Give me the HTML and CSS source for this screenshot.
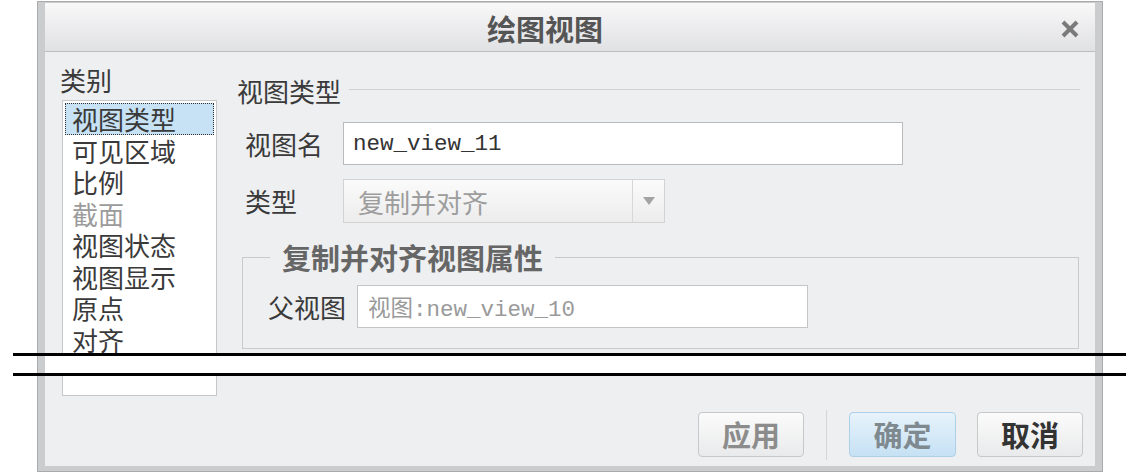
FILE: index.html
```html
<!DOCTYPE html>
<html lang="zh-CN">
<head>
  <meta charset="UTF-8" />
  <title>绘图视图</title>
  <link rel="stylesheet" href="styles.css">
</head>
<body>
  <div class="dialog">
    <div class="titlebar">
      <div class="title">绘图视图</div>
      <div class="close">
        <svg width="18" height="18" viewBox="0 0 18 18">
          <path d="M2 2 L16 16 M16 2 L2 16" stroke="#7a7a7a" stroke-width="4" fill="none"/>
        </svg>
      </div>
    </div>

    <div class="content">
      <div class="main">
        <div class="categories">
          <div class="cat-label">类别</div>
          <ul class="cat-list">
            <li class="selected">视图类型</li>
            <li>可见区域</li>
            <li>比例</li>
            <li class="disabled">截面</li>
            <li>视图状态</li>
            <li>视图显示</li>
            <li>原点</li>
            <li>对齐</li>
          </ul>
        </div>

        <div class="panel">
          <div class="section-head">
            <span>视图类型</span>
            <div class="rule"></div>
          </div>

          <div class="row name-row">
            <label>视图名</label>
            <div class="field name-field">new_view_11</div>
          </div>

          <div class="row type-row">
            <label>类型</label>
            <div class="select">
              <span class="value">复制并对齐</span>
              <span class="arrow"><i></i></span>
            </div>
          </div>

          <fieldset class="group">
            <legend>复制并对齐视图属性</legend>
            <div class="row parent-row">
              <label>父视图</label>
              <div class="field parent-field">视图:new_view_10</div>
            </div>
          </fieldset>
        </div>
      </div>

      <div class="footer">
        <button class="btn apply">应用</button>
        <div class="sep"></div>
        <button class="btn ok">确定</button>
        <button class="btn cancel">取消</button>
      </div>
    </div>
  </div>

  <div class="break"></div>
</body>
</html>
```

FILE: styles.css
```css
body {
  margin: 0;
  background: #fff;
  font-family: "Noto Sans CJK SC", sans-serif;
  color: #3a3a3a;
}
.dialog {
  width: 1066px;
  margin: 1px 0 0 37px;
  box-sizing: border-box;
  border: 1px solid #a9aaac;
  background: #cbccce;
  padding: 1px 7px 5px;
}
.titlebar {
  display: flex;
  align-items: center;
  height: 48px;
  border-bottom: 1px solid #bcbdbf;
  background: linear-gradient(#f8f8f9, #e0e1e3);
}
.title {
  flex: 1;
  text-align: center;
  font-size: 29px;
  font-weight: 700;
  line-height: 1;
  color: #555;
  padding-top: 3px;
}
.close {
  width: 50px;
  display: flex;
  justify-content: center;
  padding-top: 4px;
}
.content {
  height: 414px;
  box-sizing: border-box;
  padding: 13px 15px 9px 17px;
  background: #eeeff1;
  display: flex;
  flex-direction: column;
}
.main {
  display: grid;
  grid-template-columns: 155px 1fr;
  column-gap: 20px;
  height: 331px;
}
.cat-label {
  font-size: 26px;
  line-height: 30px;
  margin: 0 0 5px -2px;
}
.cat-list {
  list-style: none;
  margin: 0;
  padding: 2px;
  height: 296px;
  box-sizing: border-box;
  border: 1px solid #c6c7c9;
  background: #fff;
  overflow: hidden;
}
.cat-list li {
  font-size: 26px;
  line-height: 29.5px;
  padding-left: 6px;
  border: 1px dotted transparent;
  white-space: nowrap;
}
.cat-list li.selected {
  background: #c6e2f4;
  border-color: #333;
}
.cat-list li.disabled {
  color: #9b9b9b;
}
.section-head {
  display: flex;
  align-items: center;
  margin-top: 11px;
  font-size: 26px;
  line-height: 30px;
}
.section-head .rule {
  flex: 1;
  height: 1px;
  background: #cfd0d2;
  margin: 0 0 4px 8px;
}
.row {
  display: flex;
  align-items: center;
}
.row label {
  font-size: 26px;
  line-height: 30px;
}
.name-row {
  margin-top: 16px;
  padding-left: 8px;
}
.name-row label,
.type-row label {
  width: 98px;
}
.type-row {
  margin-top: 14px;
  padding-left: 8px;
}
.field {
  height: 43px;
  box-sizing: border-box;
  border: 1px solid #b9babc;
  background: #fff;
  display: flex;
  align-items: center;
  padding-left: 9px;
  font-family: "Liberation Mono", "Noto Sans CJK SC", monospace;
  font-size: 22.5px;
  color: #333;
}
.name-field {
  width: 560px;
}
.select {
  width: 322px;
  height: 44px;
  box-sizing: border-box;
  border: 1px solid #d2d3d5;
  background: linear-gradient(#fbfbfb, #ececed);
  display: flex;
}
.select .value {
  flex: 1;
  display: flex;
  align-items: center;
  padding-left: 14px;
  font-size: 26px;
  color: #9d9d9d;
}
.select .arrow {
  width: 32px;
  box-sizing: border-box;
  border-left: 1px solid #d6d7d9;
  display: flex;
  align-items: center;
  justify-content: center;
}
.select .arrow i {
  border-left: 6px solid transparent;
  border-right: 6px solid transparent;
  border-top: 8px solid #a3a3a3;
}
.group {
  margin: 19px 1px 0 5px;
  padding: 13px 0 20px 25px;
  border: 1px solid #c9cacc;
  min-width: 0;
}
.group legend {
  margin-left: 2px;
  padding: 0 12px;
  font-size: 29px;
  font-weight: 700;
  line-height: 30px;
  color: #666;
}
.parent-row label {
  width: 89px;
}
.parent-field {
  width: 451px;
  padding-left: 10px;
  border-color: #c4c5c7;
  color: #9a9a9a;
}
.footer {
  display: flex;
  justify-content: flex-end;
  align-items: center;
  height: 45px;
  margin: 16px -3px 0 0;
}
.btn {
  width: 106px;
  height: 45px;
  box-sizing: border-box;
  padding: 0;
  border: 1px solid #c7c8ca;
  border-radius: 4px;
  background: linear-gradient(#fbfbfb, #e9eaeb);
  font-family: "Noto Sans CJK SC", sans-serif;
  font-size: 29px;
  font-weight: 700;
  line-height: 1;
  color: #333;
}
.btn.apply {
  color: #8c8c8c;
}
.btn.ok {
  width: 107px;
  margin-right: 21px;
  background: linear-gradient(#e7f3fb, #c6e1f4);
  border-color: #aecfe8;
  color: #7f8990;
}
.sep {
  width: 1px;
  height: 50px;
  background: #d4d5d7;
  margin: 0 22px;
}
.break {
  position: absolute;
  left: 13px;
  top: 353px;
  width: 1113px;
  height: 23px;
  box-sizing: border-box;
  border-top: 3px solid #000;
  border-bottom: 3px solid #000;
  background: linear-gradient(to right, transparent 32px, #fff 32px, #fff 1082px, transparent 1082px);
}
```
